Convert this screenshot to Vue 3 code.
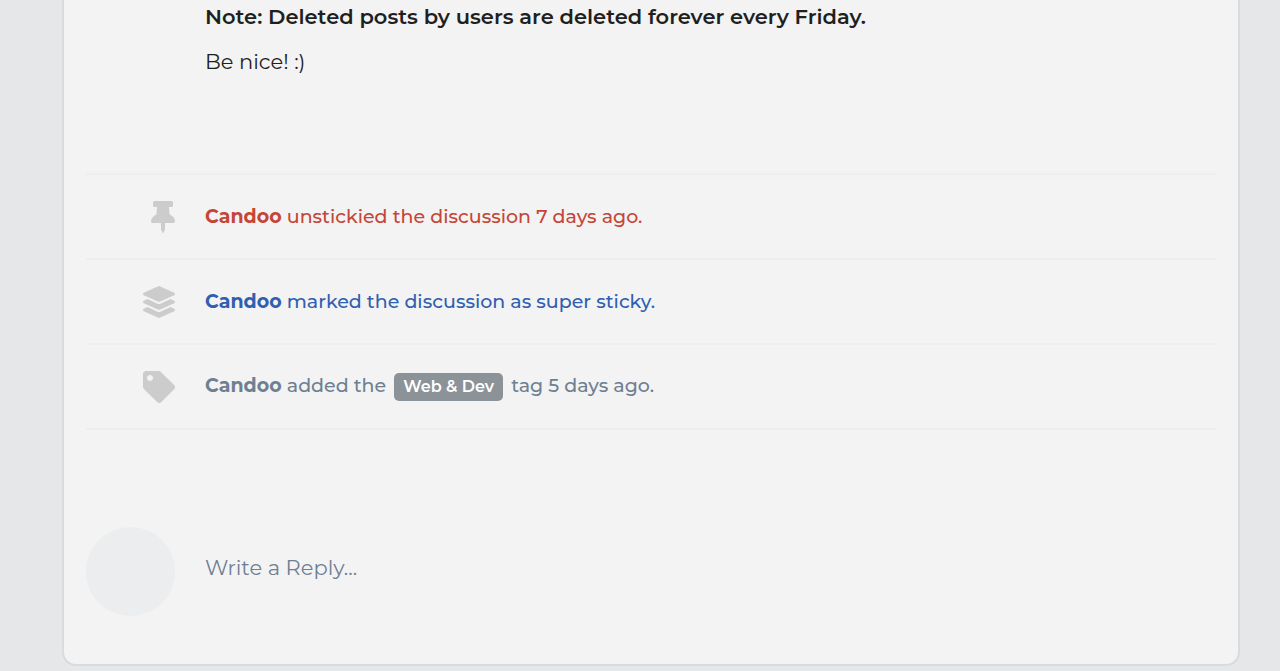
<script setup>
const events = [
  {
    id: 1,
    kind: 'unsticky',
    user: 'Candoo',
    before: 'unstickied the discussion 7 days ago.',
    viewBox: '0 0 384 512',
    icon: 'M298.028 214.267L285.793 96H328c13.255 0 24-10.745 24-24V24c0-13.255-10.745-24-24-24H56C42.745 0 32 10.745 32 24v48c0 13.255 10.745 24 24 24h42.207L85.972 214.267C37.465 236.82 0 277.261 0 328c0 13.255 10.745 24 24 24h136v104.007c0 1.242.289 2.467.845 3.578l24 48c2.941 5.882 11.364 5.893 14.311 0l24-48a8.008 8.008 0 0 0 .845-3.578V352h136c13.255 0 24-10.745 24-24-.001-51.183-37.983-91.42-85.973-113.733z',
  },
  {
    id: 2,
    kind: 'super-sticky',
    user: 'Candoo',
    before: 'marked the discussion as super sticky.',
    viewBox: '0 0 512 512',
    icon: 'M12.41 148.02l232.94 105.67c6.8 3.09 14.49 3.09 21.29 0l232.94-105.67c16.55-7.51 16.55-32.52 0-40.03L266.65 2.31a25.607 25.607 0 0 0-21.29 0L12.41 107.98c-16.55 7.51-16.55 32.53 0 40.04zm487.18 88.28l-58.09-26.33-161.64 73.27c-7.56 3.43-15.59 5.17-23.86 5.17s-16.29-1.74-23.86-5.17L70.51 209.97l-58.1 26.33c-16.55 7.5-16.55 32.5 0 40l232.94 105.59c6.8 3.08 14.49 3.08 21.29 0L499.59 276.3c16.55-7.5 16.55-32.5 0-40zm0 127.8l-57.87-26.23-161.86 73.37c-7.56 3.43-15.59 5.17-23.86 5.17s-16.29-1.74-23.86-5.17L70.29 337.87 12.41 364.1c-16.55 7.5-16.55 32.5 0 40l232.94 105.59c6.8 3.08 14.49 3.08 21.29 0L499.59 404.1c16.55-7.5 16.55-32.5 0-40z',
  },
  {
    id: 3,
    kind: 'tagged',
    user: 'Candoo',
    before: 'added the',
    tag: 'Web & Dev',
    after: 'tag 5 days ago.',
    viewBox: '0 0 512 512',
    icon: 'M0 252.118V48C0 21.49 21.49 0 48 0h204.118a48 48 0 0 1 33.941 14.059l211.882 211.882c18.745 18.745 18.745 49.137 0 67.882L293.823 497.941c-18.745 18.745-49.137 18.745-67.882 0L14.059 286.059A48 48 0 0 1 0 252.118zM112 64c-26.51 0-48 21.49-48 48s21.49 48 48 48 48-21.49 48-48-21.49-48-48-48z',
  },
]
</script>

<template>
  <main class="discussion">
    <article class="post">
      <p><strong>Note: Deleted posts by users are deleted forever every Friday.</strong></p>
      <p>Be nice! :)</p>
    </article>

    <ul class="events">
      <li v-for="event in events" :key="event.id" class="event" :class="event.kind">
        <svg class="icon" :viewBox="event.viewBox" aria-hidden="true">
          <path :d="event.icon" />
        </svg>
        <p class="info">
          <a class="user" href="#">{{ event.user }}</a>
          {{ event.before }}
          <template v-if="event.tag">
            <a class="tag" href="#">{{ event.tag }}</a>
            {{ event.after }}
          </template>
        </p>
      </li>
    </ul>

    <button class="reply" type="button">
      <span class="avatar"></span>
      <span class="prompt">Write a Reply...</span>
    </button>
  </main>
</template>

<style>
body {
  background: #e5e7e9;
}
</style>

<style scoped>
.discussion {
  margin: 0 40px 5px 62px;
  padding: 0 22px 48px;
  border: 2px solid #d9dbde;
  border-top: 0;
  border-radius: 0 0 14px 14px;
  background: #f3f3f3;
  color: #1f1f1f;
  font-family: Montserrat, Inter, "Open Sans", sans-serif;
  font-size: 21px;
}

.post {
  padding-left: 119px;
  line-height: 33px;
}

.post p {
  margin: 0 0 12px;
}

.post strong {
  font-weight: 600;
}

.events {
  margin: 95px 0 0;
  padding: 0;
  list-style: none;
  border-bottom: 2px solid #eeeeee;
}

.event {
  display: grid;
  grid-template-columns: 89px 1fr;
  column-gap: 30px;
  align-items: center;
  min-height: 83px;
  border-top: 2px solid #eeeeee;
}

.icon {
  height: 32px;
  justify-self: end;
  fill: #cccccc;
}

.info {
  margin: 0;
  font-size: 19px;
  font-weight: 500;
  line-height: 28px;
}

.unsticky {
  color: #c54637;
}

.super-sticky {
  color: #315fb0;
}

.tagged {
  color: #6f7f92;
}

.user {
  color: inherit;
  font-weight: 700;
  text-decoration: none;
}

.tag {
  display: inline-block;
  margin: 0 3px;
  padding: 0 9px;
  border-radius: 5px;
  background: #8c9398;
  color: #ffffff;
  font-size: 16px;
  font-weight: 600;
  text-decoration: none;
}

.reply {
  display: grid;
  grid-template-columns: 89px 1fr;
  column-gap: 30px;
  width: 100%;
  margin: 97px 0 0;
  padding: 0;
  border: 0;
  background: none;
  color: #6f7f92;
  font: inherit;
  text-align: left;
  cursor: text;
}

.avatar {
  height: 89px;
  border-radius: 50%;
  background: #ebedef;
}

.prompt {
  padding-top: 24px;
  line-height: 33px;
}
</style>
